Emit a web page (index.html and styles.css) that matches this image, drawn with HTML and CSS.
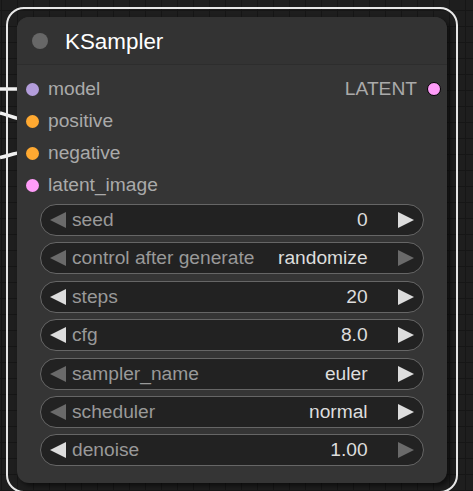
FILE: index.html
```html
<!DOCTYPE html>
<html>
<head>
<meta charset="utf-8">
<link rel="stylesheet" href="styles.css">
</head>
<body>
<svg class="links" width="473" height="491" viewBox="0 0 473 491">
  <path d="M0 89 L24 89" />
  <path d="M0 113 C8 115 14 118 24 120" />
  <path d="M0 157.5 C8 156 14 153 24 152" />
</svg>
<div class="selection">
  <div class="node">
    <div class="title">
      <span class="title-dot"></span>
      <span class="title-text">KSampler</span>
    </div>
    <div class="slots">
      <div class="slot in"><span class="dot model"></span><span>model</span></div>
      <div class="slot out"><span>LATENT</span><span class="dot latent out-dot"></span></div>
      <div class="slot in"><span class="dot cond"></span><span>positive</span></div>
      <div class="slot in"><span class="dot cond"></span><span>negative</span></div>
      <div class="slot in"><span class="dot latent"></span><span>latent_image</span></div>
    </div>
    <div class="widgets">
      <div class="widget">
        <svg class="arrow off" viewBox="0 0 16 16"><polygon points="16,0 0,8 16,16"/></svg>
        <span class="label">seed</span><span class="value">0</span>
        <svg class="arrow" viewBox="0 0 16 16"><polygon points="0,0 16,8 0,16"/></svg>
      </div>
      <div class="widget">
        <svg class="arrow off" viewBox="0 0 16 16"><polygon points="16,0 0,8 16,16"/></svg>
        <span class="label">control after generate</span><span class="value">randomize</span>
        <svg class="arrow off" viewBox="0 0 16 16"><polygon points="0,0 16,8 0,16"/></svg>
      </div>
      <div class="widget">
        <svg class="arrow" viewBox="0 0 16 16"><polygon points="16,0 0,8 16,16"/></svg>
        <span class="label">steps</span><span class="value">20</span>
        <svg class="arrow" viewBox="0 0 16 16"><polygon points="0,0 16,8 0,16"/></svg>
      </div>
      <div class="widget">
        <svg class="arrow" viewBox="0 0 16 16"><polygon points="16,0 0,8 16,16"/></svg>
        <span class="label">cfg</span><span class="value">8.0</span>
        <svg class="arrow" viewBox="0 0 16 16"><polygon points="0,0 16,8 0,16"/></svg>
      </div>
      <div class="widget">
        <svg class="arrow off" viewBox="0 0 16 16"><polygon points="16,0 0,8 16,16"/></svg>
        <span class="label">sampler_name</span><span class="value">euler</span>
        <svg class="arrow" viewBox="0 0 16 16"><polygon points="0,0 16,8 0,16"/></svg>
      </div>
      <div class="widget">
        <svg class="arrow off" viewBox="0 0 16 16"><polygon points="16,0 0,8 16,16"/></svg>
        <span class="label">scheduler</span><span class="value">normal</span>
        <svg class="arrow" viewBox="0 0 16 16"><polygon points="0,0 16,8 0,16"/></svg>
      </div>
      <div class="widget">
        <svg class="arrow" viewBox="0 0 16 16"><polygon points="16,0 0,8 16,16"/></svg>
        <span class="label">denoise</span><span class="value">1.00</span>
        <svg class="arrow off" viewBox="0 0 16 16"><polygon points="0,0 16,8 0,16"/></svg>
      </div>
    </div>
  </div>
</div>
</body>
</html>
```
FILE: styles.css
```css
html, body {
  margin: 0;
  padding: 0;
}
body {
  width: 473px;
  height: 491px;
  overflow: hidden;
  position: relative;
  background-color: #1e1e1e;
  background-image:
    linear-gradient(to right, #161616 1px, transparent 1px),
    linear-gradient(to bottom, #161616 1px, transparent 1px);
  background-size: 16px 16px;
  background-position: 1px 10px;
  font-family: "Liberation Sans", Arial, sans-serif;
}
.links {
  position: absolute;
  left: 0;
  top: 0;
}
.links path {
  fill: none;
  stroke: #f2f2f2;
  stroke-width: 3.5;
}
.selection {
  position: relative;
  margin: 7px 0 0 6px;
  width: 430px;
  padding: 8px 9px 8px 9px;
  border: 2px solid #e8e8e8;
  border-radius: 18px;
}
.node {
  width: 430px;
  height: 466px;
  background: #353535;
  border-radius: 12px;
  box-shadow: 3px 3px 5px rgba(0, 0, 0, 0.55);
  display: flex;
  flex-direction: column;
}
.title {
  height: 48px;
  box-sizing: border-box;
  background: #333;
  border-radius: 12px 12px 0 0;
  border-bottom: 1px solid #2d2d2d;
  display: flex;
  align-items: center;
  padding-left: 15px;
}
.title-dot {
  width: 16px;
  height: 16px;
  border-radius: 50%;
  background: #676767;
  margin-top: 1px;
}
.title-text {
  margin-left: 17px;
  font-size: 22.4px;
  color: #fff;
  padding-top: 3px;
}
.slots {
  display: grid;
  grid-template-columns: 1fr auto;
  grid-auto-rows: 32px;
  padding-top: 8px;
}
.slot {
  display: flex;
  align-items: center;
  font-size: 19.2px;
  color: #aaa;
  line-height: 32px;
}
.slot.in {
  grid-column: 1;
  padding-left: 9px;
}
.slot.out {
  grid-column: 2;
  grid-row: 1;
  padding-right: 6px;
}
.dot {
  width: 13px;
  height: 13px;
  border-radius: 50%;
  margin-right: 9px;
  box-sizing: border-box;
}
.dot.model { background: #b39ddb; }
.dot.cond { background: #ffa931; }
.dot.latent { background: #ff9cf9; }
.dot.out-dot {
  margin-right: 0;
  margin-left: 10px;
  border: 1.5px solid #000;
  width: 14px;
  height: 14px;
}
.widgets {
  display: flex;
  flex-direction: column;
  gap: 6.4px;
  padding: 3px 23.4px 0 23px;
}
.widget {
  height: 32px;
  box-sizing: border-box;
  border: 1px solid #666;
  border-radius: 16px;
  background: #222;
  display: flex;
  align-items: center;
  padding: 0 8.6px;
  font-size: 19.2px;
  line-height: 30px;
}
.arrow {
  width: 16px;
  height: 16px;
  flex: none;
  fill: #ddd;
}
.arrow.off {
  fill: #6a6a6a;
}
.label {
  color: #999;
  margin-left: 6.4px;
  flex: 1;
  white-space: nowrap;
}
.value {
  color: #ddd;
  margin-right: 30.4px;
  white-space: nowrap;
}
```
